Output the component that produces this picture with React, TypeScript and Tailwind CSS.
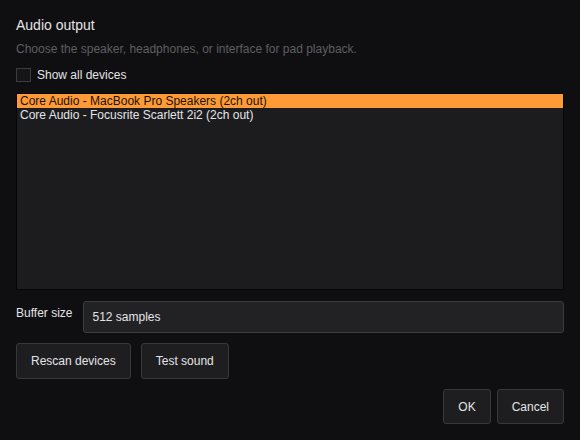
import { useState } from 'react'

const DEVICES = [
  'Core Audio - MacBook Pro Speakers (2ch out)',
  'Core Audio - Focusrite Scarlett 2i2 (2ch out)',
]

const btnCls =
  'h-9 rounded-[3px] border border-[#38383b] bg-[#1e1e21] px-[14px] text-[12px] text-[#e4e4e6] hover:bg-[#26262a]'

export default function App() {
  const [showAll, setShowAll] = useState(false)
  const [selected, setSelected] = useState(0)

  return (
    <div
      className="flex h-[440px] w-[580px] flex-col bg-[#0f0f11] p-4 text-[#e4e4e6]"
      style={{ fontFamily: '"Liberation Sans", Arial, sans-serif' }}
    >
      <h1 className="text-[14px] leading-[18px]">Audio output</h1>
      <p className="mt-[7px] text-[12px] leading-4 text-[#5e5e62]">
        Choose the speaker, headphones, or interface for pad playback.
      </p>

      <label className="mt-[11px] flex h-[14px] items-center gap-[6px] text-[12px]">
        <button
          onClick={() => setShowAll(!showAll)}
          className="h-[14px] w-[15px] border border-[#3c3c40] bg-[#151517] text-[10px] leading-none"
        >
          {showAll ? '✓' : ''}
        </button>
        Show all devices
      </label>

      {/* device list */}
      <div className="mt-[11px] h-[197px] border border-[#060607] bg-[#1c1c1f]">
        {DEVICES.map((d, i) => (
          <div
            key={d}
            onClick={() => setSelected(i)}
            className={
              i === selected
                ? 'h-[14px] bg-[#ff9b37] px-[3px] text-[12px] leading-[14px] text-[#1a1208]'
                : 'h-[14px] px-[3px] text-[12px] leading-[14px] text-[#e4e4e6]'
            }
          >
            {d}
          </div>
        ))}
      </div>

      <div className="mt-[11px] flex items-start gap-[11px]">
        <span className="mt-[4px] text-[12px] leading-4">Buffer size</span>
        <div className="flex h-8 flex-1 items-center rounded-[3px] border border-[#3c3c40] bg-[#222225] px-2 text-[12px]">
          512 samples
        </div>
      </div>

      <div className="mt-[10px] flex gap-[10px]">
        <button className={btnCls}>Rescan devices</button>
        <button className={btnCls}>Test sound</button>
      </div>

      <div className="mt-[10px] flex justify-end gap-[6px]">
        <button className={`${btnCls} h-[35px]`}>OK</button>
        <button className={`${btnCls} h-[35px]`}>Cancel</button>
      </div>
    </div>
  )
}
